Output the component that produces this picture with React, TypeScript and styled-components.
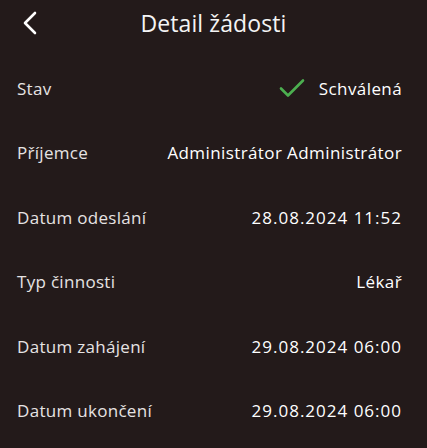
import React from "react";
import styled, { createGlobalStyle } from "styled-components";

const rows = [
  { label: "Stav", value: "Schválená", approved: true },
  { label: "Příjemce", value: "Administrátor Administrátor" },
  { label: "Datum odeslání", value: "28.08.2024 11:52", numeric: true },
  { label: "Typ činnosti", value: "Lékař" },
  { label: "Datum zahájení", value: "29.08.2024 06:00", numeric: true },
  { label: "Datum ukončení", value: "29.08.2024 06:00", numeric: true },
];

const App = () => {
  return (
    <StyledWrap>
      <GlobalStyle />
      <StyledHeader>
        <StyledBack aria-label="Zpět">
          <svg width="16" height="24" viewBox="0 0 16 24" fill="none">
            <path
              d="M13 2 L3 12 L13 22"
              stroke="#fff"
              strokeWidth="2.6"
              strokeLinecap="round"
              strokeLinejoin="round"
            />
          </svg>
        </StyledBack>
        <StyledTitle>Detail žádosti</StyledTitle>
      </StyledHeader>
      <StyledList>
        {rows.map((row) => (
          <StyledRow key={row.label}>
            <StyledLabel>{row.label}</StyledLabel>
            <StyledValue $numeric={row.numeric}>
              {row.approved && (
                <svg width="26" height="20" viewBox="0 0 26 20" fill="none">
                  <path
                    d="M2 10.5 L9 17.5 L24 2.5"
                    stroke="#4caf50"
                    strokeWidth="2.6"
                    strokeLinecap="round"
                    strokeLinejoin="round"
                  />
                </svg>
              )}
              {row.value}
            </StyledValue>
          </StyledRow>
        ))}
      </StyledList>
    </StyledWrap>
  );
};

export default App;

const GlobalStyle = createGlobalStyle`
  html, body {
    margin: 0;
    padding: 0;
    background: #231a1a;
  }
  body {
    font-family: "Open Sans", "Noto Sans", sans-serif;
    color: #f2f2f2;
  }
`;

const StyledWrap = styled.article`
  width: 427px;
  height: 448px;
  background: #231a1a;
  overflow: hidden;
`;

const StyledHeader = styled.header`
  position: relative;
  height: 45px;
  display: flex;
  align-items: center;
  justify-content: center;
  margin-bottom: 11px;
`;

const StyledBack = styled.button`
  position: absolute;
  left: 22px;
  top: 11px;
  padding: 0;
  border: 0;
  background: none;
  display: flex;
`;

const StyledTitle = styled.h2`
  margin: 0;
  font-size: 23px;
  font-weight: 400;
  letter-spacing: 0.1px;
  color: #f4f4f4;
`;

const StyledList = styled.ul`
  list-style: none;
  margin: 0;
  padding: 0 25px 0 17px;
`;

const StyledRow = styled.li`
  height: 64.5px;
  display: flex;
  align-items: center;
  justify-content: space-between;
`;

const StyledLabel = styled.span`
  font-size: 17px;
  letter-spacing: 0.3px;
  color: #e6e3e3;
`;

const StyledValue = styled.span<{ $numeric?: boolean }>`
  display: flex;
  align-items: center;
  gap: 14px;
  font-size: 17px;
  font-weight: 500;
  letter-spacing: ${(p) => (p.$numeric ? "1px" : "0.4px")};
  color: #ffffff;
`;
